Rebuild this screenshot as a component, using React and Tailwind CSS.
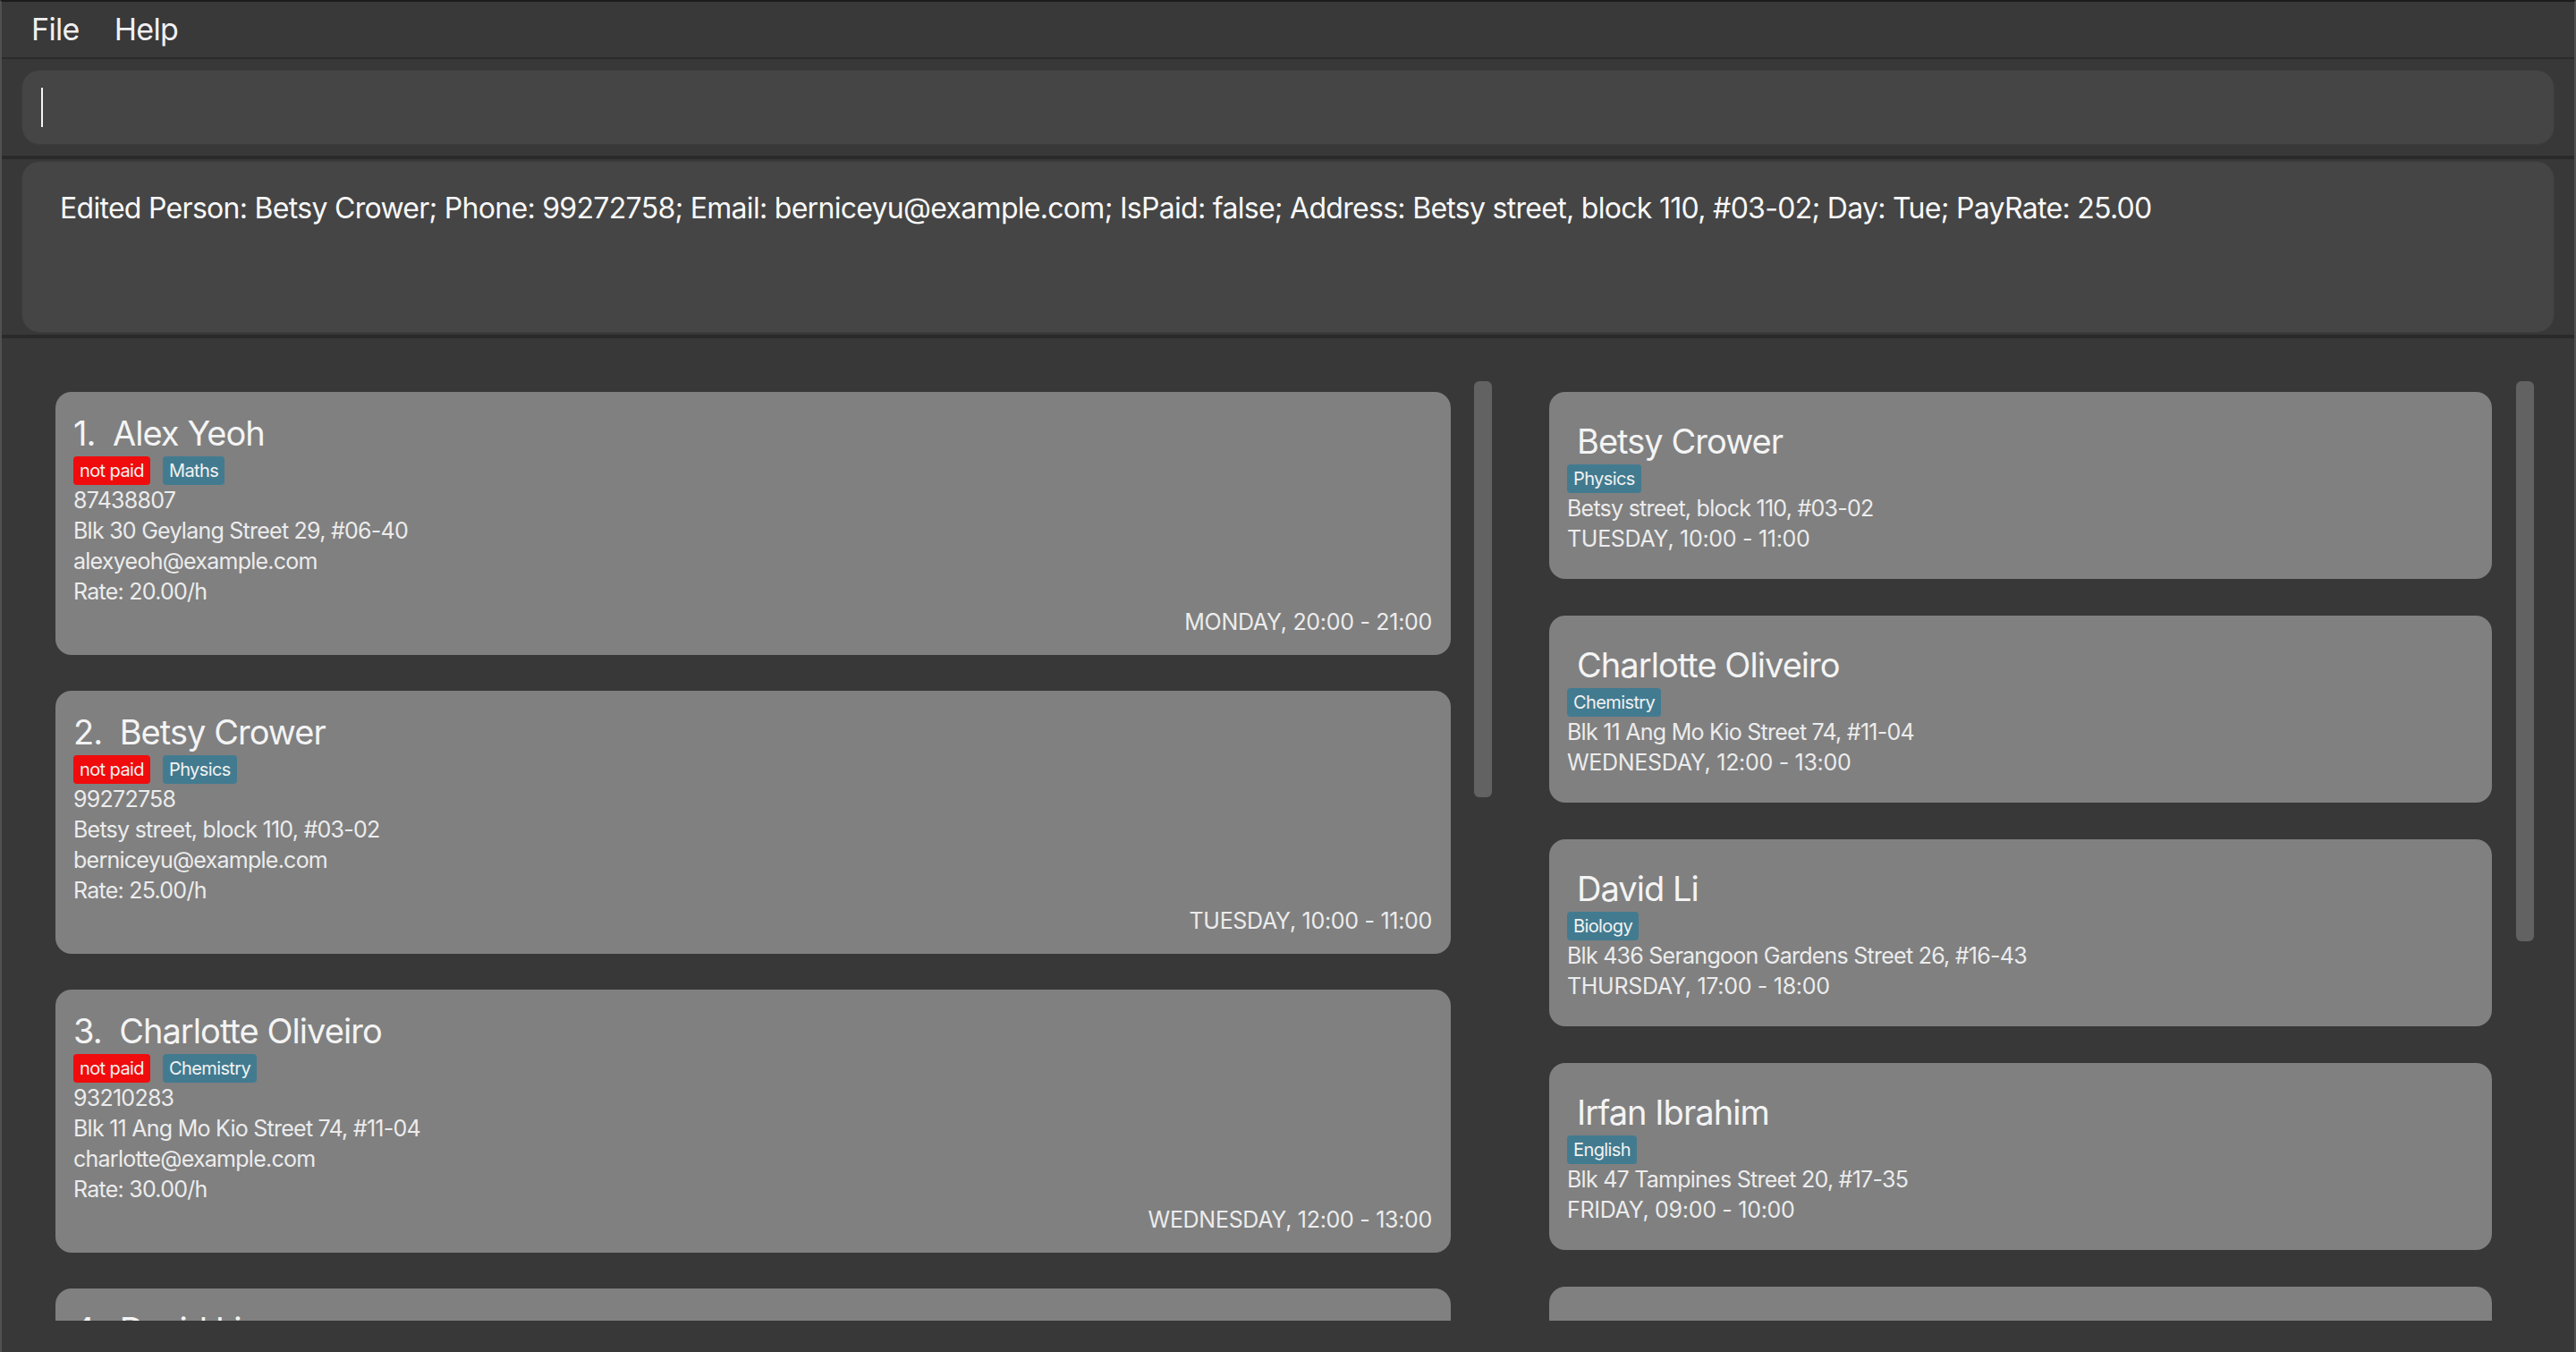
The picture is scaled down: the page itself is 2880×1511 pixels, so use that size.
import React from "react";

const leftPeople = [
  {
    id: 1,
    name: "Alex Yeoh",
    tag: "Maths",
    phone: "87438807",
    address: "Blk 30 Geylang Street 29, #06-40",
    email: "alexyeoh@example.com",
    rate: "Rate: 20.00/h",
    day: "MONDAY, 20:00 - 21:00",
  },
  {
    id: 2,
    name: "Betsy Crower",
    tag: "Physics",
    phone: "99272758",
    address: "Betsy street, block 110, #03-02",
    email: "berniceyu@example.com",
    rate: "Rate: 25.00/h",
    day: "TUESDAY, 10:00 - 11:00",
  },
  {
    id: 3,
    name: "Charlotte Oliveiro",
    tag: "Chemistry",
    phone: "93210283",
    address: "Blk 11 Ang Mo Kio Street 74, #11-04",
    email: "charlotte@example.com",
    rate: "Rate: 30.00/h",
    day: "WEDNESDAY, 12:00 - 13:00",
  },
  {
    id: 4,
    name: "David Li",
    tag: "Biology",
    phone: "91031282",
    address: "Blk 436 Serangoon Gardens Street 26, #16-43",
    email: "lidavid@example.com",
    rate: "Rate: 35.00/h",
    day: "THURSDAY, 17:00 - 18:00",
  },
];

const rightPeople = [
  {
    name: "Betsy Crower",
    tag: "Physics",
    address: "Betsy street, block 110, #03-02",
    day: "TUESDAY, 10:00 - 11:00",
  },
  {
    name: "Charlotte Oliveiro",
    tag: "Chemistry",
    address: "Blk 11 Ang Mo Kio Street 74, #11-04",
    day: "WEDNESDAY, 12:00 - 13:00",
  },
  {
    name: "David Li",
    tag: "Biology",
    address: "Blk 436 Serangoon Gardens Street 26, #16-43",
    day: "THURSDAY, 17:00 - 18:00",
  },
  {
    name: "Irfan Ibrahim",
    tag: "English",
    address: "Blk 47 Tampines Street 20, #17-35",
    day: "FRIDAY, 09:00 - 10:00",
  },
  {
    name: "Roy Balakrishnan",
    tag: "History",
    address: "Blk 45 Aljunied Street 85, #11-31",
    day: "SATURDAY, 14:00 - 15:00",
  },
];

function Tag({ children, red }) {
  return (
    <span
      className={
        "inline-flex h-[32px] items-center rounded-[4px] px-[7px] text-[20px] leading-[32px] tracking-[-0.03em] text-[#f2f2f2] " +
        (red ? "bg-[#f00c0c]" : "bg-[#427b90]")
      }
    >
      {children}
    </span>
  );
}

function LeftCard({ p }) {
  return (
    <div className="mb-[40px] flex h-[294px] w-[1560px] shrink-0 flex-col rounded-[18px] bg-[#808080] pl-[20px] pr-[21px] pt-[23px] pb-[20px]">
      <div className="h-[46px] whitespace-pre text-[38px] leading-[46px] tracking-[-0.025em] text-[#f4f4f4]">
        {p.id + ".  " + p.name}
      </div>
      <div className="mt-[3px] flex h-[32px] gap-[14px]">
        <Tag red>not paid</Tag>
        <Tag>{p.tag}</Tag>
      </div>
      <div className="text-[25px] leading-[34px] tracking-[-0.03em] text-[#ececec]">
        <div>{p.phone}</div>
        <div>{p.address}</div>
        <div>{p.email}</div>
        <div>{p.rate}</div>
        <div className="text-right tracking-[-0.012em]">{p.day}</div>
      </div>
    </div>
  );
}

function RightCard({ p }) {
  return (
    <div className="mb-[41px] flex h-[209px] w-[1054px] shrink-0 flex-col rounded-[18px] bg-[#808080] pl-[20px] pt-[32px]">
      <div className="h-[46px] pl-[11px] text-[38px] leading-[46px] tracking-[-0.025em] text-[#f4f4f4]">
        {p.name}
      </div>
      <div className="mt-[3px] flex h-[32px]">
        <Tag>{p.tag}</Tag>
      </div>
      <div className="text-[25px] leading-[34px] tracking-[-0.03em] text-[#ececec]">
        <div>{p.address}</div>
        <div className="tracking-[-0.012em]">{p.day}</div>
      </div>
    </div>
  );
}

export default function App() {
  return (
    <div className="flex h-[1511px] w-[2880px] flex-col overflow-hidden border-x-2 border-t-2 border-x-[#505050] border-t-[#1c1c1c] bg-[#383838] font-['Inter',sans-serif] text-white">
      {/* Menu bar */}
      <div className="flex h-[64px] shrink-0 items-center gap-[39px] border-b-2 border-[#2b2b2b] bg-[#393939] pl-[33px] text-[34px] leading-[40px] tracking-[-0.02em] text-[#f0f0f0]">
        <span>File</span>
        <span>Help</span>
      </div>

      {/* Command box */}
      <div className="flex h-[108px] shrink-0 flex-col px-[22px] pt-[12px]">
        <div className="flex h-[84px] items-center rounded-[20px] border border-[#3c3c3c] bg-[#454545] pl-[21px]">
          <div className="h-[44px] w-[2px] bg-[#f5f5f5]" />
        </div>
      </div>
      <div className="h-[4px] shrink-0 bg-[#2a2a2a]" />

      {/* Result display */}
      <div className="flex h-[196px] shrink-0 flex-col px-[22px] pt-[2px]">
        <div className="h-[192px] rounded-[20px] border border-[#3c3c3c] bg-[#454545] pl-[42px] pt-[32px] text-[32px] leading-[40px] tracking-[-0.022em] text-[#f8f8f8]">
          Edited Person: Betsy Crower; Phone: 99272758; Email: berniceyu@example.com; IsPaid: false; Address: Betsy street, block 110, #03-02; Day: Tue; PayRate: 25.00
        </div>
      </div>
      <div className="h-[4px] shrink-0 bg-[#2a2a2a]" />

      {/* Lists */}
      <div className="flex shrink-0 pt-[48px] pl-[60px]">
        <div className="flex h-[1050px] overflow-hidden">
          <div className="flex flex-col pt-[12px]">
            {leftPeople.map((p) => (
              <LeftCard key={p.id} p={p} />
            ))}
          </div>
          <div className="ml-[26px] h-[465px] w-[20px] shrink-0 rounded-[6px] bg-[#626262]" />
        </div>
        <div className="ml-[64px] flex h-[1050px] overflow-hidden">
          <div className="flex flex-col pt-[12px]">
            {rightPeople.map((p) => (
              <RightCard key={p.name} p={p} />
            ))}
          </div>
          <div className="ml-[27px] h-[626px] w-[20px] shrink-0 rounded-[6px] bg-[#626262]" />
        </div>
      </div>
    </div>
  );
}
